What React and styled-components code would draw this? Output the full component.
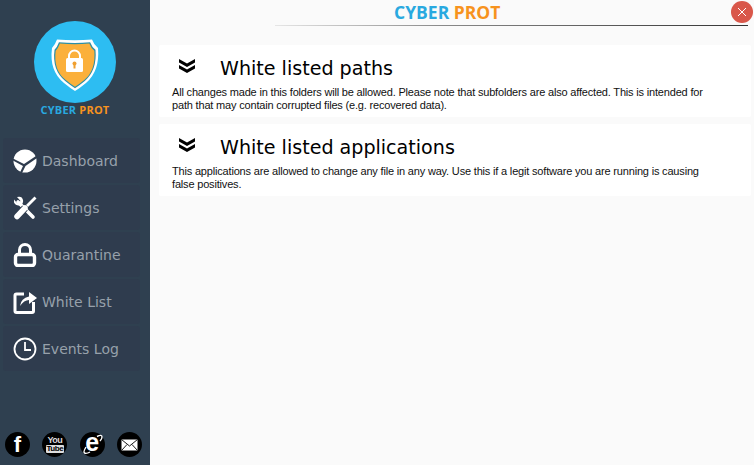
import styled, { createGlobalStyle } from "styled-components";

const Global = createGlobalStyle`
html, body { margin: 0; padding: 0; }
body { background: #fafafa; overflow: hidden; }
`
const Window = styled.div`
width: 754px;
height: 465px;
display: flex;
background: #fafafa;
overflow: hidden;
`
const Sidebar = styled.aside`
width: 150px;
height: 465px;
flex: none;
display: flex;
flex-direction: column;
background: #2f4050;
`
const LogoBox = styled.div`
height: 136px;
display: flex;
flex-direction: column;
align-items: center;
padding-top: 21px;
box-sizing: border-box;
`
const LogoName = styled.div`
font: 700 11px "Open Sans", sans-serif;
line-height: 14px;
letter-spacing: 0.2px;
`
const Blue = styled.span`
color: #29a9e0;
`
const Orange = styled.span`
color: #f7931e;
`
const Menu = styled.nav`
display: flex;
flex-direction: column;
gap: 2px;
padding: 2px 10px 0 3px;
flex: 1;
`
const MenuItem = styled.div`
height: 45px;
display: flex;
align-items: center;
gap: 5px;
padding-left: 10px;
background: #2f3c4e;
border-radius: 3px;
font: 14px "DejaVu Sans", sans-serif;
color: #97a1ab;
`
const MenuIcon = styled.svg`
width: 24px;
height: 24px;
flex: none;
`
const Social = styled.div`
display: flex;
justify-content: space-between;
padding: 0 8px 8px 5px;
`
const Round = styled.div`
width: 25px;
height: 25px;
border-radius: 50%;
background: #000;
display: flex;
align-items: center;
justify-content: center;
color: #fff;
`
const FbLetter = styled.span`
font: 700 22px/25px "Liberation Sans", sans-serif;
`
const YouTube = styled.div`
display: flex;
flex-direction: column;
align-items: center;
font: 700 9px/9px "Liberation Sans Narrow", "Liberation Sans", sans-serif;
letter-spacing: -0.5px;
color: #ddd;
`
const TubeBox = styled.span`
background: #ddd;
color: #000;
font-size: 8px;
line-height: 8px;
padding: 0 1px;
border-radius: 1px;
`
const IeBadge = styled.span`
position: relative;
display: flex;
align-items: center;
justify-content: center;
width: 25px;
height: 25px;
`
const IeLetter = styled.span`
font: 700 25px/25px "Liberation Sans", sans-serif;
margin-top: -5px;
`
const IeRing = styled.svg`
position: absolute;
left: 0;
top: 0;
width: 25px;
height: 25px;
`
const Main = styled.main`
flex: 1;
display: flex;
flex-direction: column;
min-width: 0;
`
const TopBar = styled.header`
height: 26px;
margin-left: 125px;
margin-right: 6px;
box-sizing: border-box;
border-bottom: 1px solid;
border-image: linear-gradient(90deg, #e6e6e6, #8a8a8a 35%, #333 100%) 1;
display: flex;
position: relative;
padding-left: 119px;
`
const Brand = styled.div`
font: 700 17.5px/24px "Open Sans", sans-serif;
`
const Close = styled.button`
position: absolute;
top: 1px;
right: -5px;
width: 22px;
height: 22px;
border: 0;
padding: 0;
border-radius: 50%;
background: #d9574a;
color: #fff;
display: flex;
align-items: center;
justify-content: center;
`
const Panels = styled.div`
display: flex;
flex-direction: column;
gap: 7px;
padding: 19px 3px 0 9px;
`
const Panel = styled.section`
height: 72px;
box-sizing: border-box;
background: #fff;
border-radius: 2px;
padding: 9px 13px 0;
`
const PanelHead = styled.div`
display: flex;
align-items: flex-start;
height: 32px;
`
const Chevrons = styled.svg`
width: 18px;
height: 15px;
margin: 4px 0 0 6px;
flex: none;
`
const Title = styled.h2`
margin: 1px 0 0 24px;
font: 400 19.1px/28px "DejaVu Sans", sans-serif;
color: #000;
`
const Desc = styled.p`
margin: 0;
font: 11px/13px "Liberation Sans", sans-serif;
color: #111;
letter-spacing: -0.18px;
white-space: nowrap;
`

const paths = {
  dashboard: (
    <>
      <circle cx="12" cy="12" r="11.5" fill="#fff" />
      <path d="M0 9.500 L11 15 L23 7 L24 9 L12.500 17 L9 24 L7 23.500 L10 17 L0 11.500 Z" fill="#2f3c4e" />
    </>
  ),
  settings: (
    <>
      <path d="M5 6 L20 21" stroke="#fff" strokeWidth="3.600" strokeLinecap="round" />
      <path d="M1 3.500 L4.500 7.500 L7.500 5 L4 1 Q9 -0.500 10 4 Q10.500 7 8.500 9 Q3 10.500 1 6.500 Z" fill="#fff" />
      <path d="M22.500 1.500 L14 10" stroke="#fff" strokeWidth="2.800" />
      <path d="M12 12 L4 20.500" stroke="#2f3c4e" strokeWidth="7.500" />
      <path d="M12 12 L4 20.500" stroke="#fff" strokeWidth="5.500" strokeLinecap="round" />
    </>
  ),
  lock: (
    <>
      <path d="M6.5 11 V7 a5.5 5.5 0 0 1 11 0 V11" fill="none" stroke="#fff" strokeWidth="3" />
      <rect x="2.5" y="11.5" width="19" height="11" rx="2.5" fill="none" stroke="#fff" strokeWidth="3.4" />
    </>
  ),
  share: (
    <>
      <path d="M11 4 H3.5 Q2 4 2 5.5 V21 Q2 22.5 3.500 22.5 H19 Q20.5 22.500 20.5 21 V12" fill="none" stroke="#fff" strokeWidth="3" />
      <path d="M7 16 Q8 8 16 6.500 V2 L24 8 L16 14 V10 Q11 10 7 16 Z" fill="#fff" />
    </>
  ),
  clock: (
    <>
      <circle cx="12" cy="12" r="10.500" fill="none" stroke="#fff" strokeWidth="1.800" />
      <path d="M12 5 V13 H18" fill="none" stroke="#fff" strokeWidth="1.800" />
    </>
  ),
}

const menu = [
  ["Dashboard", "dashboard"],
  ["Settings", "settings"],
  ["Quarantine", "lock"],
  ["White List", "share"],
  ["Events Log", "clock"],
]

const panels = [
  {
    title: "White listed paths",
    lines: [
      "All changes made in this folders will be allowed. Please note that subfolders are also affected. This is intended for",
      "path that may contain corrupted files (e.g. recovered data).",
    ],
  },
  {
    title: "White listed applications",
    lines: [
      "This applications are allowed to change any file in any way. Use this if a legit software you are running is causing",
      "false positives.",
    ],
  },
]

const shield = "M23 18.5 Q41 20 58 18.5 Q60 24 64 27 Q66 50 52 62 Q46 67 41 70 Q36 67 30 62 Q15 50 18 27 Q21 24 23 18.5 Z"

const ShieldLogo = () => (
  <svg width="82" height="82" viewBox="0 0 82 82">
    <circle cx="41" cy="41" r="41" fill="#2dbdf2" />
    <path d={shield} fill="#fff" />
    <path d={shield} fill="#2a8fa8" transform="translate(41 44) scale(0.89) translate(-41 -44)" />
    <path d={shield} fill="#fbb03b" transform="translate(41 44) scale(0.84) translate(-41 -44)" />
    <path d="M35 37 V35 a5.500 5.500 0 0 1 11 0 V37" fill="none" stroke="#fff" strokeWidth="2" />
    <rect x="32" y="37" width="17" height="14" rx="1.500" fill="#fff" />
    <circle cx="40.500" cy="42.500" r="2" fill="#f0a030" />
    <rect x="39.500" y="42.500" width="2" height="5" fill="#f0a030" />
  </svg>
)

const App = () => (
  <Window>
    <Global />
    <Sidebar>
      <LogoBox>
        <ShieldLogo />
        <LogoName>
          <Blue>CYBER</Blue> <Orange>PROT</Orange>
        </LogoName>
      </LogoBox>
      <Menu>
        {menu.map(([label, icon]) => (
          <MenuItem key={label}>
            <MenuIcon viewBox="0 0 24 24">{paths[icon]}</MenuIcon>
            {label}
          </MenuItem>
        ))}
      </Menu>
      <Social>
        <Round><FbLetter>f</FbLetter></Round>
        <Round>
          <YouTube><span>You</span><TubeBox>Tube</TubeBox></YouTube>
        </Round>
        <Round>
          <IeBadge>
            <IeLetter>e</IeLetter>
            <IeRing viewBox="0 0 25 25">
              <path d="M17 4.500 Q22 2 22 5 Q22 7 20 9 M6 15 Q3 20 4.500 21 Q6.500 22 10 20" fill="none" stroke="#fff" strokeWidth="1.400" />
            </IeRing>
          </IeBadge>
        </Round>
        <Round>
          <svg width="17" height="12" viewBox="0 0 17 12">
            <rect x="0.5" y="0.5" width="16" height="11" fill="#fff" />
            <path d="M0.5 0.5 L8.500 7 L16.500 0.500 M0.5 11.500 L6 5.500 M16.500 11.500 L11 5.500" fill="none" stroke="#000" strokeWidth="0.9" />
          </svg>
        </Round>
      </Social>
    </Sidebar>
    <Main>
      <TopBar>
        <Brand>
          <Blue>CYBER</Blue> <Orange>PROT</Orange>
        </Brand>
        <Close aria-label="Close">
          <svg width="10" height="10" viewBox="0 0 10 10">
            <path d="M1 1 L9 9 M9 1 L1 9" stroke="#fff" strokeWidth="1" />
          </svg>
        </Close>
      </TopBar>
      <Panels>
        {panels.map((panel) => (
          <Panel key={panel.title}>
            <PanelHead>
              <Chevrons viewBox="0 0 18 15">
                <path d="M1 1 L9 5.500 L17 1 V4.500 L9 9 L1 4.500 Z M1 7 L9 11.500 L17 7 V10.500 L9 15 L1 10.500 Z" fill="#000" />
              </Chevrons>
              <Title>{panel.title}</Title>
            </PanelHead>
            <Desc>
              {panel.lines[0]}<br />{panel.lines[1]}
            </Desc>
          </Panel>
        ))}
      </Panels>
    </Main>
  </Window>
)

export default App
